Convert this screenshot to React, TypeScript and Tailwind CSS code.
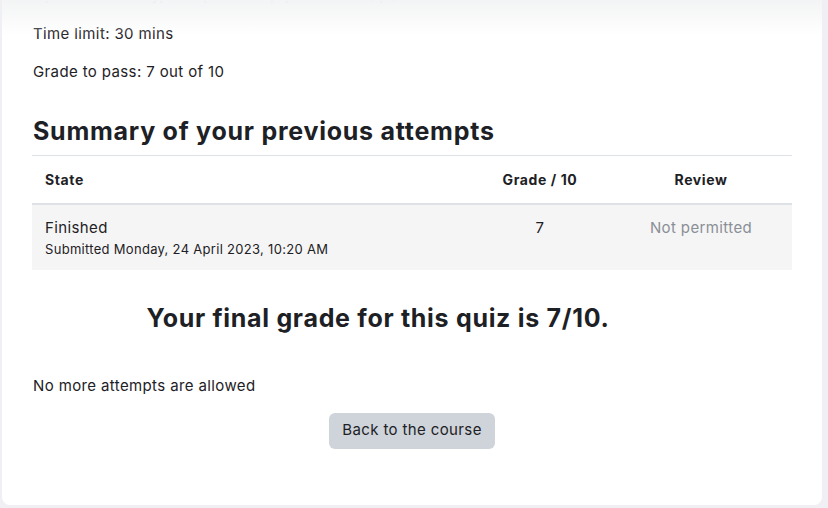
import React from "react";

const attempts = [
  {
    state: "Finished",
    submitted: "Submitted Monday, 24 April 2023, 10:20 AM",
    grade: "7",
    review: "Not permitted",
  },
];

export default function App() {
  return (
    <div
      className="min-h-screen w-[828px] h-[508px] overflow-hidden bg-[#f0f0f4] pl-[2px] pr-[6px] text-[#1d2125]"
      style={{ fontFamily: "Inter, 'Noto Sans', sans-serif" }}
    >
      <div className="relative h-[505px] overflow-hidden rounded-b-[8px] bg-white px-[31px] tracking-[0.38px]">
        {/* faded strip of the previous line, under the sticky header */}
        <div className="pointer-events-none absolute inset-x-0 top-0 z-10 h-[36px] bg-gradient-to-b from-[#f3f4f5] to-white/0" />
        <p className="mt-[-13px] h-[16px] text-[15px] leading-[16px] text-[#1d2125]/60">
          Opened: Monday, 24 April 2023, quiz closes (qs)
        </p>

        <p className="mt-[20px] text-[15px] leading-[22px]">Time limit: 30 mins</p>
        <p className="mt-[16px] text-[15px] leading-[22px]">Grade to pass: 7 out of 10</p>

        <h2 className="mt-[33px] text-[25px] font-bold leading-[30px] tracking-[0.75px]">
          Summary of your previous attempts
        </h2>

        <table className="mt-[9px] ml-[-1px] w-[760px] border-collapse text-[15px]">
          <thead>
            <tr className="border-t border-b-2 border-t-[#dee2e6] border-b-[#dee2e6]">
              <th className="h-[48px] pl-[13px] pr-[12px] text-left text-[14px] font-bold tracking-[0.6px]">State</th>
              <th className="w-[140px] px-[12px] text-center text-[14px] font-bold tracking-[0.6px]">Grade / 10</th>
              <th className="w-[182px] px-[12px] text-center text-[14px] font-bold tracking-[0.6px]">Review</th>
            </tr>
          </thead>
          <tbody>
            {attempts.map((a) => (
              <tr key={a.submitted} className="bg-[#f5f5f5] align-top">
                <td className="h-[66px] pl-[13px] pr-[12px] pt-[12px]">
                  <div className="leading-[22px]">{a.state}</div>
                  <div className="text-[13px] leading-[20px] tracking-[0.3px]">{a.submitted}</div>
                </td>
                <td className="px-[12px] pt-[12px] text-center leading-[22px]">{a.grade}</td>
                <td className="px-[12px] pt-[12px] text-center leading-[22px] text-[#8a8f95]">{a.review}</td>
              </tr>
            ))}
          </tbody>
        </table>

        <h3 className="mt-[32px] pr-[68px] text-center text-[25px] font-bold leading-[32px] tracking-[0.7px]">
          Your final grade for this quiz is 7/10.
        </h3>

        <p className="mt-[41px] text-[15px] leading-[22px]">No more attempts are allowed</p>

        <div className="mt-[16px] flex justify-center">
          <button className="h-[36px] rounded-[6px] bg-[#ced4da] px-[13px] text-[15px] text-[#1d2125]">
            Back to the course
          </button>
        </div>
      </div>
    </div>
  );
}
